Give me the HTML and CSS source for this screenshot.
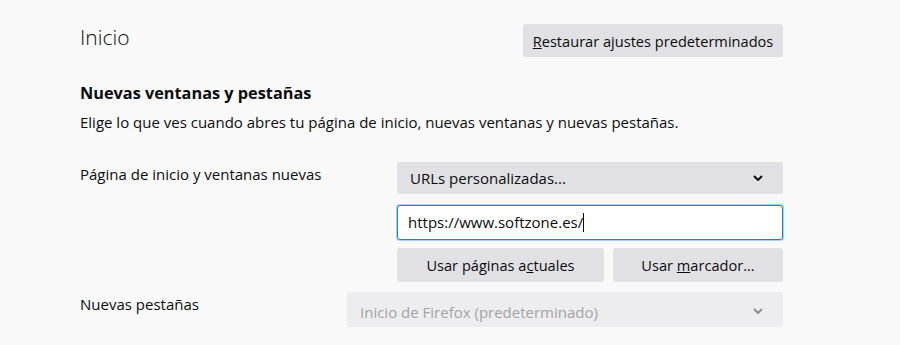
FILE: index.html
```html
<!DOCTYPE html>
<html lang="es">
<head>
<meta charset="utf-8">
<link rel="stylesheet" href="styles.css">
</head>
<body>
<main class="pane">
  <header class="pane-header">
    <h1 class="title">Inicio</h1>
    <button class="btn btn-restore"><u>R</u>estaurar ajustes predeterminados</button>
  </header>
  <section class="group">
    <h2 class="group-title">Nuevas ventanas y pestañas</h2>
    <p class="group-desc">Elige lo que ves cuando abres tu página de inicio, nuevas ventanas y nuevas pestañas.</p>
    <div class="row row-home">
      <div class="row-label">Página de inicio y ventanas nuevas</div>
      <div class="row-controls">
        <div class="select">
          <span>URLs personalizadas...</span>
          <svg class="chev" width="10" height="7" viewBox="0 0 10 7"><path d="M1.5 1.5 L5 5 L8.5 1.5" fill="none" stroke="#0c0c0d" stroke-width="2" stroke-linecap="round" stroke-linejoin="round"/></svg>
        </div>
        <div class="input">https://www.softzone.es/<span class="caret"></span></div>
        <div class="btn-row">
          <button class="btn btn-current">Usar páginas a<u>c</u>tuales</button>
          <button class="btn btn-bookmark">Usar <u>m</u>arcador...</button>
        </div>
      </div>
    </div>
    <div class="row row-tabs">
      <div class="row-label">Nuevas pestañas</div>
      <div class="select select-disabled">
        <span>Inicio de Firefox (predeterminado)</span>
        <svg class="chev" width="10" height="7" viewBox="0 0 10 7"><path d="M1.5 1.5 L5 5 L8.5 1.5" fill="none" stroke="#8f8f92" stroke-width="2" stroke-linecap="round" stroke-linejoin="round"/></svg>
      </div>
    </div>
  </section>
</main>
</body>
</html>
```
FILE: styles.css
```css
html, body {
  margin: 0;
  padding: 0;
  background: #f9f9fa;
}
body {
  font-family: "Open Sans", "Noto Sans", sans-serif;
  color: #0c0c0d;
  font-size: 15px;
}
.pane {
  width: 703px;
  padding: 24px 0 0 80px;
}
.pane-header {
  display: flex;
  justify-content: space-between;
  align-items: flex-start;
}
.title {
  margin: 0;
  font-size: 21px;
  font-weight: 300;
  line-height: 26px;
}
.btn {
  font-family: inherit;
  font-size: 14.6px;
  color: #0c0c0d;
  background: #e1e1e5;
  border: none;
  border-radius: 2px;
  padding: 0 8px;
  margin: 0;
  height: 33px;
}
.btn-restore {
  width: 260px;
}
.group-title {
  margin: 25px 0 0;
  font-size: 16.3px;
  font-weight: 700;
  line-height: 22px;
}
.group-desc {
  margin: 8px 0 0;
  line-height: 20px;
}
.row {
  display: flex;
  justify-content: space-between;
  align-items: flex-start;
}
.row-home {
  margin-top: 30px;
}
.row-label {
  line-height: 20px;
  padding-top: 2px;
}
.row-controls {
  width: 386px;
  display: flex;
  flex-direction: column;
}
.select {
  height: 32px;
  background: #e1e1e5;
  border-radius: 2px;
  display: flex;
  align-items: center;
  justify-content: space-between;
  padding: 0 20px 0 13px;
}
.input {
  margin-top: 11px;
  height: 33px;
  line-height: 33px;
  background: #ffffff;
  border: 1px solid #0a84ff;
  border-radius: 3px;
  box-shadow: 0 0 0 1px #a7d0f8;
  padding: 0 10px;
}
.caret {
  display: inline-block;
  width: 1px;
  height: 19px;
  background: #0c0c0d;
  vertical-align: -4px;
}
.btn-row {
  margin-top: 8px;
  display: flex;
  gap: 9px;
}
.btn-current {
  width: 207px;
  height: 34px;
}
.btn-bookmark {
  flex: 1;
  height: 34px;
}
.row-tabs {
  margin-top: 10px;
}
.select-disabled {
  width: 436px;
  box-sizing: border-box;
  height: 35px;
  background: #ededf0;
  color: #a3a3a6;
  padding-top: 4px;
}
```
